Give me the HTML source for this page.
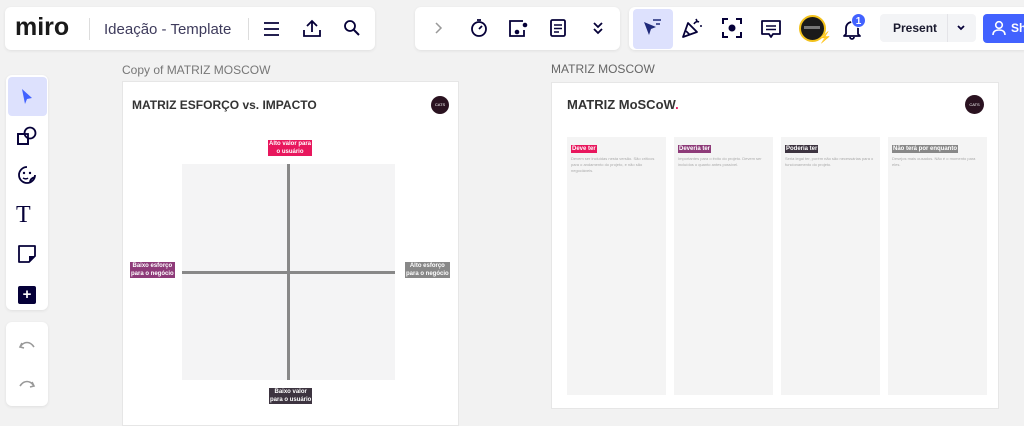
<!DOCTYPE html>
<html><head><meta charset="utf-8"><style>
*{margin:0;padding:0;box-sizing:border-box}
body{width:1024px;height:419px;background:#f2f2f2;position:relative;overflow:hidden;font-family:"Liberation Sans",sans-serif;color:#050038}
.a{position:absolute}
.panel{position:absolute;background:#fff;border-radius:6px;box-shadow:0 1px 3px rgba(0,0,0,.08)}
svg{position:absolute}
.lbl{position:absolute;color:#fff;font-size:6px;font-weight:bold;line-height:8px;text-align:center;padding:0 1px}
.col{position:absolute;top:137px;width:99px;height:258px;background:#f4f4f4}
.tag{position:absolute;left:4px;top:8px;font-size:6px;color:#fff;font-weight:bold;padding:0 1px;line-height:8px}
.desc{position:absolute;left:4px;top:19px;right:6px;font-size:4px;line-height:6px;color:#aaa}
</style></head><body>
<!-- top panel 1 -->
<div class="panel" style="left:5px;top:7px;width:370px;height:43px"></div>
<div class="a" style="left:15px;top:14px;font-size:25px;font-weight:bold;letter-spacing:0px;color:#1a1a1a;line-height:26px">miro</div>
<div class="a" style="left:89px;top:18px;width:1px;height:22px;background:#ddd"></div>
<div class="a" style="left:104px;top:21px;font-size:15px;color:#3e3b5c">Ideação - Template</div>
<div class="a" style="left:248px;top:18px;width:1px;height:22px;background:#ddd"></div>
<svg style="left:262px;top:19px" width="20" height="20" viewBox="0 0 20 20"><path d="M2 4h15M2 10h15M2 16h15" stroke="#050038" stroke-width="1.8"/></svg>
<svg style="left:302px;top:18px" width="20" height="20" viewBox="0 0 20 20"><path d="M10 14V3M5 8l5-5 5 5M2 12v6h16v-6" stroke="#050038" stroke-width="1.8" fill="none"/></svg>
<svg style="left:343px;top:19px" width="18" height="18" viewBox="0 0 18 18"><circle cx="7" cy="7" r="5" stroke="#050038" stroke-width="1.8" fill="none"/><path d="M11 11l5 5" stroke="#050038" stroke-width="2"/></svg>
<!-- panel 2 -->
<div class="panel" style="left:415px;top:7px;width:205px;height:43px"></div>
<svg style="left:433px;top:22px" width="10" height="12" viewBox="0 0 10 12"><path d="M3 1l5 5-5 5" stroke="#999" stroke-width="1.5" fill="none"/></svg>
<svg style="left:469px;top:18px" width="20" height="20" viewBox="0 0 20 20"><circle cx="10" cy="11" r="7" stroke="#050038" stroke-width="1.8" fill="none"/><path d="M8 2h4M10 11l3-3" stroke="#050038" stroke-width="1.8"/></svg>
<svg style="left:508px;top:18px" width="22" height="20" viewBox="0 0 22 20"><path d="M15 3H2v15h14v-6" stroke="#050038" stroke-width="1.8" fill="none"/><circle cx="9" cy="14" r="2.3" fill="#050038"/><circle cx="17" cy="7" r="2.3" fill="#050038"/></svg>
<svg style="left:548px;top:18px" width="20" height="20" viewBox="0 0 20 20"><rect x="3" y="2" width="14" height="16" rx="1.5" stroke="#050038" stroke-width="1.8" fill="none"/><path d="M6 7h8M6 10.5h8M6 14h5" stroke="#050038" stroke-width="1.6"/></svg>
<svg style="left:592px;top:21px" width="12" height="14" viewBox="0 0 12 14"><path d="M2 2l4 4 4-4M2 8l4 4 4-4" stroke="#050038" stroke-width="1.8" fill="none"/></svg>
<!-- panel 3 -->
<div class="panel" style="left:629px;top:7px;width:400px;height:43px"></div>
<div class="a" style="left:633px;top:9px;width:40px;height:40px;background:#dde1fd;border-radius:4px"></div>
<svg style="left:641px;top:17px" width="24" height="22" viewBox="0 0 24 22"><path d="M3 5l12 5-5 2-2 6z" fill="#1f2a7a"/><path d="M12 3h8M15 7h4" stroke="#1f2a7a" stroke-width="1.6"/></svg>
<svg style="left:680px;top:16px" width="24" height="24" viewBox="0 0 24 24"><path d="M3 21l5-14 9 9z" stroke="#050038" stroke-width="1.8" fill="none" stroke-linejoin="round"/><path d="M6 15l4 4M14 8c1-2 3-3 5-2M16 3l1 2M20 10h2" stroke="#050038" stroke-width="1.6" fill="none"/></svg>
<svg style="left:721px;top:17px" width="22" height="22" viewBox="0 0 22 22"><path d="M2 7V2h5M15 2h5v5M20 15v5h-5M7 20H2v-5" stroke="#050038" stroke-width="2" fill="none"/><circle cx="11" cy="11" r="3.5" fill="#050038"/></svg>
<svg style="left:760px;top:18px" width="22" height="22" viewBox="0 0 22 22"><path d="M2 3h18v13h-7l-2 3-2-3H2z" stroke="#050038" stroke-width="1.8" fill="none" stroke-linejoin="round"/><path d="M6 8h10M6 11.5h10" stroke="#050038" stroke-width="1.6"/></svg>
<div class="a" style="left:799px;top:15px;width:27px;height:27px;border-radius:50%;background:#1a1a1a;border:2px solid #f2c11b"></div>
<div class="a" style="left:804px;top:26px;width:16px;height:3px;background:#777"></div>
<div class="a" style="left:818px;top:31px;font-size:11px;color:#f2c11b">⚡</div>
<svg style="left:842px;top:18px" width="20" height="22" viewBox="0 0 20 22"><path d="M4 16V10a6 6 0 0 1 12 0v6l2 2H2z M8 19a2 2 0 0 0 4 0" stroke="#050038" stroke-width="1.8" fill="none" stroke-linejoin="round"/></svg>
<div class="a" style="left:851px;top:13px;width:15px;height:15px;border-radius:50%;background:#4262ff;color:#fff;font-size:10px;font-weight:bold;text-align:center;line-height:15px;border:1px solid #fff">1</div>
<div class="a" style="left:880px;top:14px;width:96px;height:28px;background:#f3f4f6;border-radius:4px"></div>
<div class="a" style="left:947px;top:14px;width:1px;height:28px;background:#e4e4e8"></div>
<div class="a" style="left:893px;top:21px;font-size:12px;font-weight:bold;color:#1a1a2e">Present</div>
<svg style="left:956px;top:24px" width="10" height="8" viewBox="0 0 10 8"><path d="M2 2l3 3 3-3" stroke="#050038" stroke-width="1.8" fill="none"/></svg>
<div class="a" style="left:983px;top:14px;width:50px;height:29px;background:#4262ff;border-radius:4px"></div>
<svg style="left:992px;top:20px" width="14" height="16" viewBox="0 0 14 16"><circle cx="7" cy="5" r="3.3" stroke="#fff" stroke-width="1.6" fill="none"/><path d="M1 15c0-4 3-5 6-5s6 1 6 5" stroke="#fff" stroke-width="1.6" fill="none"/></svg>
<div class="a" style="left:1011px;top:21px;font-size:12px;font-weight:bold;color:#fff">Sh</div>
<!-- left toolbar -->
<div class="panel" style="left:6px;top:75px;width:42px;height:235px"></div>
<div class="a" style="left:8px;top:77px;width:39px;height:39px;background:#dde1fd;border-radius:4px"></div>
<svg style="left:19px;top:87px" width="16" height="20" viewBox="0 0 16 20"><path d="M3 2l10 9-5 1-2 5z" fill="#4262ff"/></svg>
<svg style="left:16px;top:125px" width="22" height="22" viewBox="0 0 22 22"><rect x="2" y="9" width="10" height="10" stroke="#050038" stroke-width="1.8" fill="none"/><circle cx="14" cy="8" r="5.5" stroke="#050038" stroke-width="1.8" fill="#fff"/><rect x="2" y="9" width="10" height="10" stroke="#050038" stroke-width="1.8" fill="none"/></svg>
<svg style="left:16px;top:164px" width="22" height="22" viewBox="0 0 22 22"><path d="M19 11a8 8 0 1 1-8-8M14 19c0-4 2-5 5-6" stroke="#050038" stroke-width="1.8" fill="none"/><circle cx="8" cy="9" r="1.2" fill="#050038"/><circle cx="14" cy="9" r="1.2" fill="#050038"/><path d="M7 14c2 1 4 1 5 0" stroke="#050038" stroke-width="1.5" fill="none"/></svg>
<div class="a" style="left:16px;top:202px;font-family:'Liberation Serif',serif;font-size:24px;color:#050038;line-height:26px">T</div>
<svg style="left:17px;top:244px" width="20" height="20" viewBox="0 0 20 20"><path d="M2 2h16v10l-6 6H2z" stroke="#050038" stroke-width="1.8" fill="none" stroke-linejoin="round"/><path d="M12 18v-6h6" fill="#050038"/><path d="M12 18l6-6h-6z" fill="#050038"/></svg>
<div class="a" style="left:18px;top:286px;width:18px;height:18px;background:#050038;border-radius:2px;color:#fff;font-size:15px;font-weight:bold;text-align:center;line-height:18px">+</div>
<div class="panel" style="left:6px;top:322px;width:42px;height:84px"></div>
<svg style="left:18px;top:339px" width="18" height="14" viewBox="0 0 18 14"><path d="M4 4l-2 4 4 1M2 8c4-6 10-6 14 0" stroke="#999" stroke-width="1.6" fill="none"/></svg>
<svg style="left:18px;top:378px" width="18" height="14" viewBox="0 0 18 14"><path d="M14 4l2 4-4 1M16 8c-4-6-10-6-14 0" stroke="#999" stroke-width="1.6" fill="none"/></svg>
<!-- frame 1 -->
<div class="a" style="left:122px;top:63px;font-size:12px;color:#777">Copy of MATRIZ MOSCOW</div>
<div class="a" style="left:122px;top:81px;width:337px;height:345px;background:#fff;border:1px solid #e6e6e6"></div>
<div class="a" style="left:132px;top:98px;font-size:12px;font-weight:bold;color:#333">MATRIZ ESFORÇO vs. IMPACTO</div>
<div class="a" style="left:431px;top:96px;width:18px;height:18px;border-radius:50%;background:#2a1220;color:#fff;font-size:4px;text-align:center;line-height:18px">CATS</div>
<div class="a" style="left:182px;top:164px;width:213px;height:216px;background:#f4f4f5"></div>
<div class="a" style="left:287px;top:164px;width:3px;height:216px;background:#888"></div>
<div class="a" style="left:182px;top:271px;width:213px;height:3px;background:#888"></div>
<div class="lbl" style="left:268px;top:140px;background:#e8175d">Alto valor para<br>o usuário</div>
<div class="lbl" style="left:130px;top:262px;background:#8e3b79">Baixo esforço<br>para o negócio</div>
<div class="lbl" style="left:405px;top:262px;background:#888">Alto esforço<br>para o negócio</div>
<div class="lbl" style="left:269px;top:388px;background:#3d3440">Baixo valor<br>para o usuário</div>
<!-- frame 2 -->
<div class="a" style="left:551px;top:62px;font-size:12px;color:#666">MATRIZ MOSCOW</div>
<div class="a" style="left:551px;top:82px;width:448px;height:327px;background:#fff;border:1px solid #e6e6e6"></div>
<div class="a" style="left:567px;top:97px;font-size:13px;font-weight:bold;color:#333">MATRIZ MoSCoW<span style="color:#e8175d">.</span></div>
<div class="a" style="left:965px;top:95px;width:19px;height:19px;border-radius:50%;background:#2a1220;color:#fff;font-size:4px;text-align:center;line-height:19px">CATS</div>
<div class="col" style="left:567px"><div class="tag" style="background:#e8175d">Deve ter</div><div class="desc">Devem ser incluídas nesta versão. São críticos para o andamento do projeto, e não são negociáveis.</div></div>
<div class="col" style="left:674px"><div class="tag" style="background:#8e3b79">Deveria ter</div><div class="desc">Importantes para o êxito do projeto. Devem ser incluídos o quanto antes possível.</div></div>
<div class="col" style="left:781px"><div class="tag" style="background:#3d3440">Poderia ter</div><div class="desc">Seria legal ter, porém não são necessárias para o funcionamento do projeto.</div></div>
<div class="col" style="left:888px"><div class="tag" style="background:#888">Não terá por enquanto</div><div class="desc">Desejos mais ousados. Não é o momento para eles.</div></div>
</body></html>
